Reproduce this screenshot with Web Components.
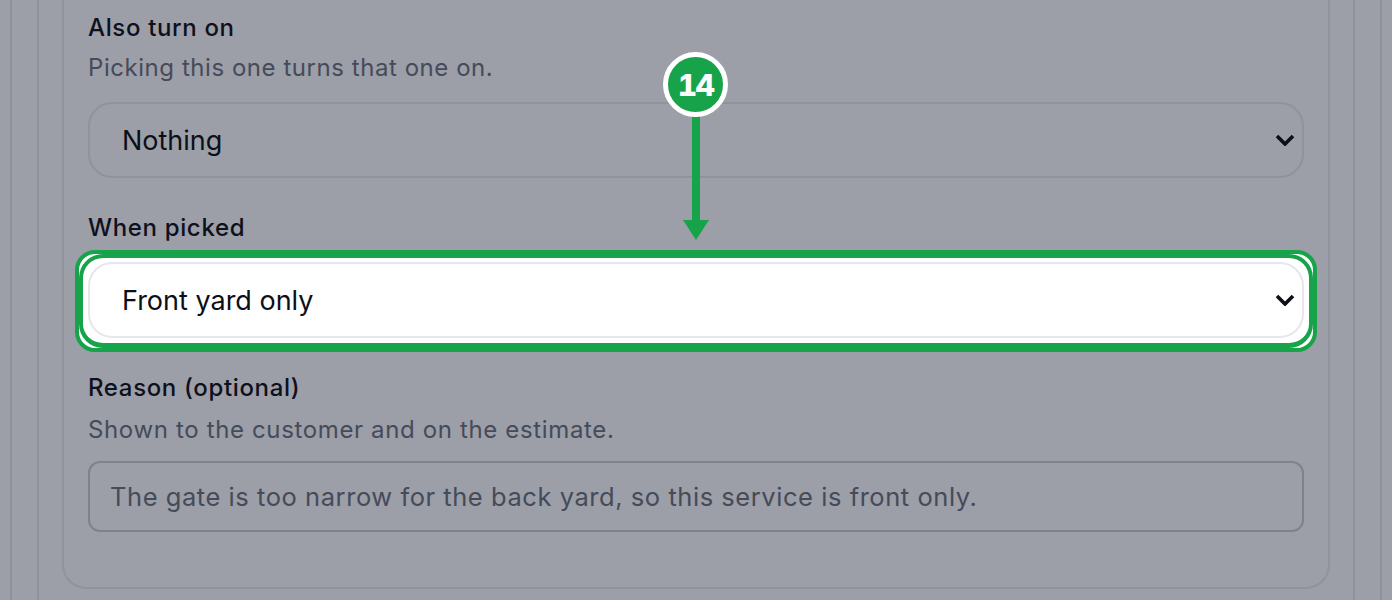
<!DOCTYPE html>
<html><head><meta charset="utf-8">
<style>
html,body{margin:0;height:600px;overflow:hidden;background:#9c9ea8}
</style></head><body>
<app-shell><form-card>
<field-block label="Also turn on" hint="Picking this one turns that one on." style="--after:34px;--hint:8px;--gap:18px;--hs:.55px">
  <select-box value="Nothing"></select-box>
</field-block>
<field-block label="When picked" style="--after:34px;--gap:18px">
  <select-box value="Front yard only" spotlight></select-box>
</field-block>
<field-block label="Reason (optional)" hint="Shown to the customer and on the estimate." style="--hint:10px;--gap:15px;--hs:.64px">
  <text-box placeholder="The gate is too narrow for the back yard, so this service is front only."></text-box>
</field-block>
</form-card></app-shell>
<step-callout n="14"></step-callout>
<script>
function el(name,html){customElements.define(name,class extends HTMLElement{connectedCallback(){if(this.shadowRoot)return;const r=this.attachShadow({mode:'open'});r.innerHTML=typeof html==='function'?html(this):html;}})}
el('app-shell',`<style>
:host{display:block;font-family:Inter,"Liberation Sans",sans-serif;height:600px;overflow:hidden;box-sizing:border-box;padding:0 10px}
.a{border:solid #8f919b;border-width:0 2px 2px;border-radius:0 0 24px 24px;padding:0 25px;height:640px;box-sizing:border-box}
.b{border:solid #90929c;border-width:0 2px 2px;border-radius:0 0 24px 24px;padding:0 23px;height:620px;box-sizing:border-box}
</style><div class="a"><div class="b"><slot></slot></div></div>`);
el('form-card',`<style>
:host{display:block;box-sizing:border-box;border:solid #90929c;border-width:0 2px 2px;border-radius:0 0 24px 24px;height:589px;padding:12px 24px 0}
</style><slot></slot>`);
el('field-block',h=>`<style>
:host{display:block;margin-bottom:var(--after,0)}
.l{font-size:24px;line-height:32px;font-weight:450;color:#0e111b;letter-spacing:.65px}
.h{font-size:24px;line-height:32px;color:#454b59;margin-top:var(--hint,8px);letter-spacing:var(--hs,.55px)}
.c{margin-top:var(--gap,10px)}
</style><div class="l">${h.getAttribute('label')}</div>${h.getAttribute('hint')?`<div class="h">${h.getAttribute('hint')}</div>`:''}<div class="c"><slot></slot></div>`);
el('select-box',h=>{const s=h.hasAttribute('spotlight');return `<style>
:host{display:block;position:relative;${s?'z-index:2;':''}}
.s{position:relative;box-sizing:border-box;height:76px;border:2px solid ${s?'#e5e7eb':'#90929c'};border-radius:24px;background:${s?'#fff':'transparent'};display:flex;align-items:center;justify-content:space-between;padding:0 7px 0 32px;font-size:27px;color:#0c0f18}
svg{width:20px;height:12px;display:block}
.ring{position:absolute;top:-12px;bottom:-14px;left:-13px;right:-13px;box-sizing:border-box;border:4px solid #16a34a;border-radius:20px;background:#fff}
.ring::before{content:"";position:absolute;inset:0;box-sizing:border-box;border:4px solid #16a34a;border-bottom-width:5px;border-radius:24px}
</style>${s?'<div class="ring"></div>':''}<div class="s"><span>${h.getAttribute('value')}</span><svg viewBox="0 0 20 12" fill="none" stroke="#0c0f18" stroke-width="3.6"><path d="M2 2l8 8 8-8"/></svg></div>`});
el('text-box',h=>`<style>
:host{display:block}
.t{box-sizing:border-box;height:71px;border:2px solid #7f828d;border-radius:12px;display:flex;align-items:center;padding:0 20px;font-size:25.5px;letter-spacing:.55px;color:#454b59;white-space:nowrap}
</style><div class="t">${h.getAttribute('placeholder')}</div>`);
el('step-callout',h=>`<style>
:host{position:absolute;left:663px;top:52px;width:65px;display:flex;flex-direction:column;align-items:center;font-family:Inter,"Liberation Sans",sans-serif}
.n{box-sizing:border-box;width:65px;height:65px;border-radius:50%;background:#16a34a;border:5px solid #fff;color:#fff;font-weight:800;font-size:30px;font-variant-numeric:tabular-nums;letter-spacing:-1.5px;display:flex;align-items:center;justify-content:center}
.line{width:8px;height:103px;background:#16a34a}
.tip{width:0;height:0;border:13px solid transparent;border-top:20px solid #16a34a;border-bottom:0}
</style><div class="n">${h.getAttribute('n')}</div><div class="line"></div><div class="tip"></div>`);
</script>
</body></html>
